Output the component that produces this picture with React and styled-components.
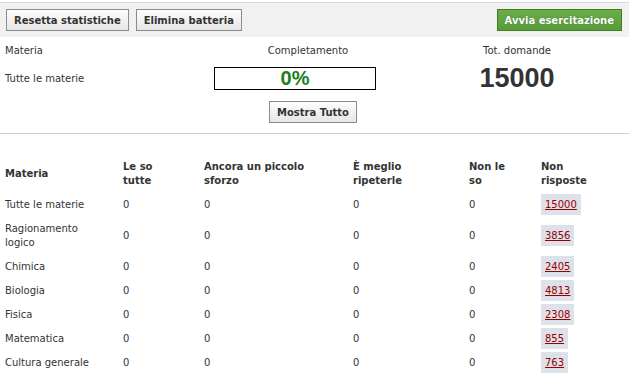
import React from 'react'
import styled, { createGlobalStyle } from 'styled-components'

const GlobalStyle = createGlobalStyle`
  body {
    margin: 0;
    background: #fff;
    font-family: "DejaVu Sans", Verdana, sans-serif;
    font-size: 10px;
    color: #333;
  }
`

const Page = styled.div`
  width: 629px;
  padding-top: 2px;
`

const Toolbar = styled.div`
  display: flex;
  align-items: center;
  gap: 7px;
  height: 34px;
  padding: 0 7px 0 6px;
  background: #f1f1f1;
  border-top: 1px solid #d9d9d9;
`

const Spacer = styled.div`
  flex: 1;
`

const Button = styled.button`
  height: 22px;
  padding: 0 7px;
  font-family: "DejaVu Sans", Verdana, sans-serif;
  font-size: 10px;
  font-weight: bold;
  color: ${p => (p.green ? '#fff' : '#333')};
  background: ${p => (p.green
    ? 'linear-gradient(#6aad4a, #579c39)'
    : 'linear-gradient(#fdfdfd, #e6e6e6)')};
  border: 1px solid ${p => (p.green ? '#3f7d27' : '#8c8c8c')};
  border-radius: 0;
  cursor: pointer;
  text-shadow: ${p => (p.green ? '0 0 1px #2d5e1a' : 'none')};
`

const Summary = styled.div`
  display: grid;
  grid-template-columns: 206px 194px 1fr;
  grid-template-rows: 21px 34px 34px;
  align-items: center;
  padding: 3px 0 0 5px;
  border-bottom: 1px solid #cfcfcf;
  height: 93px;
`

const Label = styled.div`
  text-align: ${p => p.align || 'left'};
`

const ProgressBox = styled.div`
  width: 160px;
  height: 21px;
  margin-left: 3px;
  border: 1px solid #000;
  display: flex;
  align-items: center;
  justify-content: center;
  font-family: "Liberation Sans", Arial, sans-serif;
  font-size: 20px;
  font-weight: bold;
  color: #1b7f1b;
`

const BigNumber = styled.div`
  text-align: center;
  font-family: "Liberation Sans", Arial, sans-serif;
  font-size: 27px;
  font-weight: bold;
  color: #333;
`

const ShowAll = styled(Button)`
  justify-self: start;
  margin-left: 58px;
`

const Table = styled.div`
  margin-top: 21px;
  padding-left: 5px;
`

const Row = styled.div`
  display: grid;
  grid-template-columns: 118px 81px 149px 116px 72px 1fr;
  align-items: center;
  padding: 5px 0;
  line-height: 14px;
  font-weight: ${p => (p.head ? 'bold' : 'normal')};
`

const Subject = styled.div`
  max-width: 95px;
`

const CountBox = styled.span`
  display: inline-block;
  line-height: 21px;
  margin: -4px 0;
  padding: 0 4px;
  background: #dce1ea;
`

const CountLink = styled.a`
  color: #990000;
  text-decoration: underline;
`

const subjects = [
  { name: 'Tutte le materie', open: 15000 },
  { name: 'Ragionamento logico', open: 3856 },
  { name: 'Chimica', open: 2405 },
  { name: 'Biologia', open: 4813 },
  { name: 'Fisica', open: 2308 },
  { name: 'Matematica', open: 855 },
  { name: 'Cultura generale', open: 763 }
]

export default function App() {
  return (
    <Page>
      <GlobalStyle />
      <Toolbar>
        <Button>Resetta statistiche</Button>
        <Button>Elimina batteria</Button>
        <Spacer />
        <Button green>Avvia esercitazione</Button>
      </Toolbar>

      <Summary>
        <Label>Materia</Label>
        <Label align="center">Completamento</Label>
        <Label align="center">Tot. domande</Label>

        <Label>Tutte le materie</Label>
        <ProgressBox>0%</ProgressBox>
        <BigNumber>15000</BigNumber>

        <div />
        <ShowAll>Mostra Tutto</ShowAll>
        <div />
      </Summary>

      <Table>
        <Row head>
          <div>Materia</div>
          <div>Le so<br />tutte</div>
          <div>Ancora un piccolo<br />sforzo</div>
          <div>È meglio<br />ripeterle</div>
          <div>Non le<br />so</div>
          <div>Non<br />risposte</div>
        </Row>
        {subjects.map(s => (
          <Row key={s.name}>
            <Subject>{s.name}</Subject>
            <div>0</div>
            <div>0</div>
            <div>0</div>
            <div>0</div>
            <div>
              <CountBox>
                <CountLink href="#">{s.open}</CountLink>
              </CountBox>
            </div>
          </Row>
        ))}
      </Table>
    </Page>
  )
}
